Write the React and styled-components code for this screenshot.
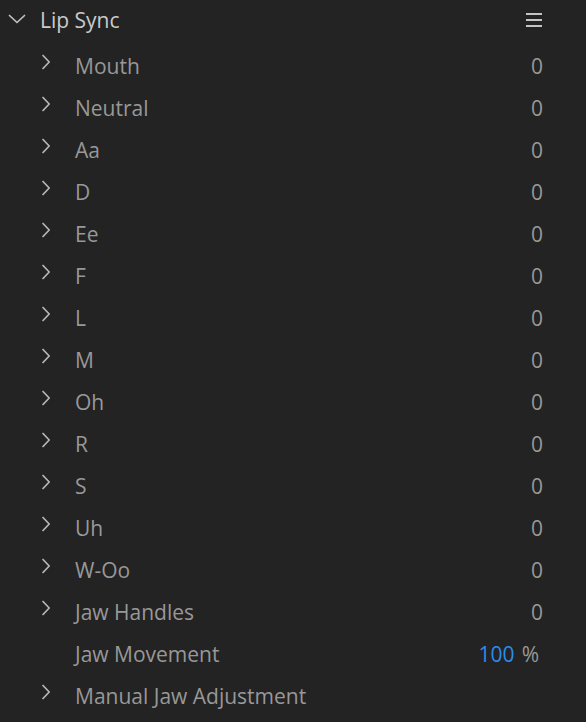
import { createGlobalStyle, styled } from 'styled-components';

const rows = [
  { name: 'Mouth', value: '0' },
  { name: 'Neutral', value: '0' },
  { name: 'Aa', value: '0' },
  { name: 'D', value: '0' },
  { name: 'Ee', value: '0' },
  { name: 'F', value: '0' },
  { name: 'L', value: '0' },
  { name: 'M', value: '0' },
  { name: 'Oh', value: '0' },
  { name: 'R', value: '0' },
  { name: 'S', value: '0' },
  { name: 'Uh', value: '0' },
  { name: 'W-Oo', value: '0' },
  { name: 'Jaw Handles', value: '0' },
  { name: 'Jaw Movement', value: '100', unit: '%', noArrow: true },
  { name: 'Manual Jaw Adjustment', noValue: true },
];

const RightChevron = () => (
  <svg width="10" height="16" viewBox="0 0 10 16" fill="none">
    <path
      d="M2 1.5 L8.2 8 L2 14.5"
      stroke="currentColor"
      strokeWidth="1.7"
      strokeLinecap="round"
      strokeLinejoin="round"
    />
  </svg>
);

const DownChevron = () => (
  <svg width="18" height="10" viewBox="0 0 18 10" fill="none">
    <path
      d="M1.5 1.5 L9 8.5 L16.5 1.5"
      stroke="currentColor"
      strokeWidth="1.7"
      strokeLinecap="round"
      strokeLinejoin="round"
    />
  </svg>
);

const App = () => {
  return (
    <>
      <GlobalStyle />
      <Panel>
        <Header>
          <Twirl>
            <DownChevron />
          </Twirl>
          <Title>Lip Sync</Title>
          <Menu>
            <span />
            <span />
            <span />
          </Menu>
        </Header>
        {rows.map((row) => (
          <Row key={row.name}>
            <Arrow>{!row.noArrow && <RightChevron />}</Arrow>
            <Label>{row.name}</Label>
            {!row.noValue && (
              <Value $withUnit={!!row.unit}>
                <Number $blue={!!row.unit}>{row.value}</Number>
                {row.unit && <Unit>{row.unit}</Unit>}
              </Value>
            )}
          </Row>
        ))}
      </Panel>
    </>
  );
};

const GlobalStyle = createGlobalStyle`
  html, body {
    margin: 0;
    background: #232323;
  }
  body {
    font-family: 'Open Sans', 'Noto Sans', sans-serif;
  }
`;

const Panel = styled.div`
  width: 586px;
  height: 722px;
  background: #232323;
  overflow: hidden;
`;

const Header = styled.div`
  display: flex;
  align-items: center;
  height: 40px;
  margin-bottom: 5px;
  padding-left: 8px;
  padding-right: 44px;
`;

const Twirl = styled.div`
  width: 32px;
  display: flex;
  align-items: center;
  color: #c0c0c0;
  margin-top: -2px;
`;

const Title = styled.div`
  flex: 1;
  font-size: 21px;
  color: #cacaca;
  margin-top: -1px;
`;

const Menu = styled.div`
  display: flex;
  flex-direction: column;
  gap: 4px;
  width: 16px;

  & > span {
    display: block;
    height: 2px;
    background: #c4c4c4;
  }
`;

const Row = styled.div`
  display: flex;
  align-items: center;
  height: 42px;
  padding-left: 41px;
  padding-right: 43px;
`;

const Arrow = styled.div`
  width: 34px;
  display: flex;
  align-items: center;
  color: #b8b8b8;
  margin-top: -8px;
`;

const Label = styled.div`
  flex: 1;
  font-size: 21px;
  color: #989898;
`;

const Value = styled.div`
  font-size: 21px;
  display: flex;
  gap: 7px;
  margin-right: ${(p) => (p.$withUnit ? '4px' : '0')};
`;

const Number = styled.span`
  color: ${(p) => (p.$blue ? '#2d8ceb' : '#989898')};
`;

const Unit = styled.span`
  color: #989898;
`;

export default App;
